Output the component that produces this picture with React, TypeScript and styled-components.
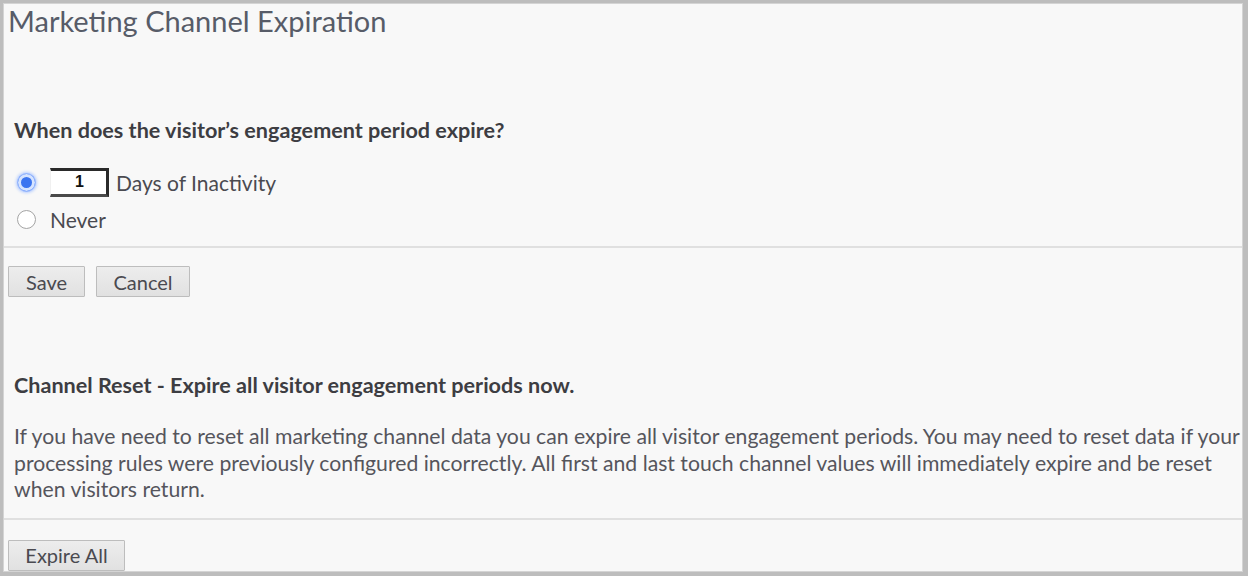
import styled, { createGlobalStyle } from 'styled-components'

const GlobalStyle = createGlobalStyle`
  html, body {
    margin: 0;
    padding: 0;
    background: #bdbdbd;
  }
`

const Frame = styled.div`
  width: 1248px;
  height: 576px;
  box-sizing: border-box;
  padding: 3px 5px 4px 3px;
  background: #bdbdbd;
`

const Panel = styled.div`
  height: 100%;
  box-sizing: border-box;
  overflow: hidden;
  background: #f8f8f8;
  border: 1px solid #d4d4d4;
  font-family: Lato, 'Open Sans', sans-serif;
  color: #4a4a4a;
  display: flex;
  flex-direction: column;
`

const Title = styled.h1`
  margin: 0;
  padding: 0 0 0 4px;
  font-size: 29px;
  font-weight: 400;
  line-height: 34px;
  color: #575c68;
`

const Section = styled.div<{ top: number }>`
  padding: ${(p) => p.top}px 10px 0;
`

const Heading = styled.div`
  font-size: 21.6px;
  font-weight: 700;
  color: #3d3d42;
  line-height: 26px;
  white-space: nowrap;
`

const RadioList = styled.div`
  display: flex;
  flex-direction: column;
  gap: 5px;
  margin-top: 23px;
  padding-left: 13px;
`

const RadioRow = styled.label`
  display: flex;
  align-items: center;
  gap: 14px;
  font-size: 21px;
  color: #4a4a50;
  height: 32px;
`

const Radio = styled.span<{ checked?: boolean }>`
  width: 19px;
  height: 19px;
  border-radius: 50%;
  box-sizing: border-box;
  border: 1px solid ${(p) => (p.checked ? '#9dbcff' : '#a4a4a4')};
  background: ${(p) => (p.checked ? '#3a74f0' : '#ffffff')};
  box-shadow: ${(p) =>
    p.checked ? 'inset 0 0 0 3px #d6e4ff, 0 0 3px 1px #b4ccff' : 'none'};
  flex-shrink: 0;
`

const DaysInput = styled.span`
  width: 59px;
  height: 29px;
  margin-right: -7px;
  box-sizing: border-box;
  background: #ffffff;
  border-top: 3px solid #2a2a2a;
  border-right: 3px solid #2a2a2a;
  border-bottom: 3px solid #4a4a4a;
  border-left: 1px solid #f0f0f0;
  display: flex;
  align-items: center;
  justify-content: flex-end;
  padding-right: 22px;
  font-family: 'Liberation Sans', Arial, sans-serif;
  font-weight: 700;
  font-size: 16px;
  color: #111;
`

const Divider = styled.div<{ top: number }>`
  height: 2px;
  background: #e0e0e0;
  margin-top: ${(p) => p.top}px;
`

const ButtonRow = styled.div<{ top: number }>`
  display: flex;
  gap: 11px;
  padding: ${(p) => p.top}px 0 0 4px;
`

const Button = styled.button<{ w: number }>`
  width: ${(p) => p.w}px;
  height: 31px;
  box-sizing: border-box;
  background: linear-gradient(#ededed, #e1e1e1);
  border: 1px solid #bdbdbd;
  border-radius: 1px;
  font-family: Lato, 'Open Sans', sans-serif;
  font-size: 20px;
  color: #4a4a50;
  padding: 0;
`

const Paragraph = styled.p`
  margin: 25px 0 0;
  font-size: 21.2px;
  line-height: 26.5px;
  color: #55555c;
  white-space: nowrap;
`

export default function App() {
  return (
    <Frame>
      <GlobalStyle />
      <Panel>
        <Title>Marketing Channel Expiration</Title>
        <Section top={79}>
          <Heading>When does the visitor’s engagement period expire?</Heading>
        </Section>
        <RadioList>
          <RadioRow>
            <Radio checked />
            <DaysInput>1</DaysInput>
            <span>Days of Inactivity</span>
          </RadioRow>
          <RadioRow>
            <Radio />
            <span>Never</span>
          </RadioRow>
        </RadioList>
        <Divider top={11} />
        <ButtonRow top={18}>
          <Button w={77}>Save</Button>
          <Button w={94}>Cancel</Button>
        </ButtonRow>
        <Section top={75}>
          <Heading>Channel Reset - Expire all visitor engagement periods now.</Heading>
          <Paragraph>
            If you have need to reset all marketing channel data you can expire all visitor
            engagement periods. You may need to reset data if your
            <br />
            processing rules were previously configured incorrectly. All first and last touch
            channel values will immediately expire and be reset
            <br />
            when visitors return.
          </Paragraph>
        </Section>
        <Divider top={15} />
        <ButtonRow top={20}>
          <Button w={117}>Expire All</Button>
        </ButtonRow>
      </Panel>
    </Frame>
  )
}
